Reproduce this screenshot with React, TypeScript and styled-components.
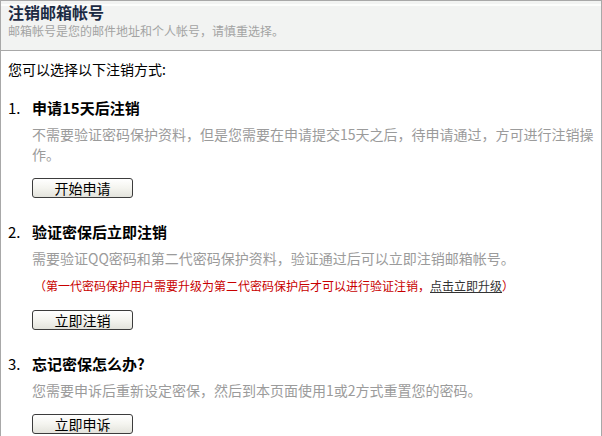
import styled, {createGlobalStyle} from "styled-components";

const GlobalStyle = createGlobalStyle`
    html, body {
        margin: 0;
        padding: 0;
        background: #fff;
    }
    body {
        font-family: "Noto Sans CJK SC", "Liberation Sans", sans-serif;
        font-size: 14px;
        color: #000;
    }
`;

const Panel = styled.div`
    width: 602px;
    height: 436px;
    box-sizing: border-box;
    border: 1px solid #a8a8a8;
    border-bottom: none;
    overflow: hidden;
`;

const Header = styled.div`
    height: 50px;
    box-sizing: border-box;
    padding: 1px 7px 0;
    background: linear-gradient(#f2f3f2 0 3px, #fcfdfc 3px 5px, #f2f3f2 5px);
    border-bottom: 1px solid #a8a8a8;
`;

const Title = styled.h1`
    margin: 0;
    font-size: 16px;
    line-height: 20px;
    font-weight: bold;
    color: #1b2a42;
`;

const Subtitle = styled.p`
    margin: 1px 0 0;
    font-size: 12px;
    line-height: 16px;
    color: #a3a3a3;
`;

const Body = styled.div`
    padding: 8px 0 0 7px;
`;

const Intro = styled.p`
    margin: 0 0 19px;
    line-height: 20px;
`;

const Option = styled.section`
    margin-bottom: 24px;
`;

const OptionHead = styled.div`
    display: flex;
    line-height: 20px;
`;

const Num = styled.span`
    width: 24px;
    font-size: 15px;
`;

const OptionTitle = styled.h2`
    margin: 0;
    font-size: 15px;
    font-weight: bold;
`;

const Content = styled.div`
    padding-left: 24px;
`;

const Desc = styled.p`
    margin: 6px 0 0;
    line-height: 20px;
    color: #9b9b9b;
`;

const Note = styled.p`
    margin: 8px 0 0 2px;
    font-size: 12px;
    line-height: 20px;
    color: #c80000;

    a {
        color: #333;
        text-decoration: underline;
    }
`;

const Button = styled.button`
    display: block;
    margin-top: 14px;
    width: 101px;
    height: 20px;
    padding: 0;
    border: 1px solid #3c3c3c;
    border-radius: 3px;
    background: linear-gradient(#ffffff, #f4f4ef 50%, #e3e3dc);
    font-family: inherit;
    font-size: 14px;
    line-height: 18px;
    color: #000;
    cursor: pointer;
`;

const options = [
  {
    title: "申请15天后注销",
    desc: "不需要验证密码保护资料，但是您需要在申请提交15天之后，待申请通过，方可进行注销操作。",
    button: "开始申请"
  },
  {
    title: "验证密保后立即注销",
    desc: "需要验证QQ密码和第二代密码保护资料，验证通过后可以立即注销邮箱帐号。",
    note: true,
    button: "立即注销"
  },
  {
    title: "忘记密保怎么办?",
    desc: "您需要申诉后重新设定密保，然后到本页面使用1或2方式重置您的密码。",
    button: "立即申诉"
  }
];

export default function App() {
  return (
    <>
      <GlobalStyle />
      <Panel>
        <Header>
          <Title>注销邮箱帐号</Title>
          <Subtitle>邮箱帐号是您的邮件地址和个人帐号，请慎重选择。</Subtitle>
        </Header>
        <Body>
          <Intro>您可以选择以下注销方式:</Intro>
          {options.map((o, i) => (
            <Option key={o.button}>
              <OptionHead>
                <Num>{i + 1}.</Num>
                <OptionTitle>{o.title}</OptionTitle>
              </OptionHead>
              <Content>
                <Desc>{o.desc}</Desc>
                {o.note && (
                  <Note>
                    （第一代密码保护用户需要升级为第二代密码保护后才可以进行验证注销，<a href="#">点击立即升级</a>）
                  </Note>
                )}
                <Button>{o.button}</Button>
              </Content>
            </Option>
          ))}
        </Body>
      </Panel>
    </>
  );
}
